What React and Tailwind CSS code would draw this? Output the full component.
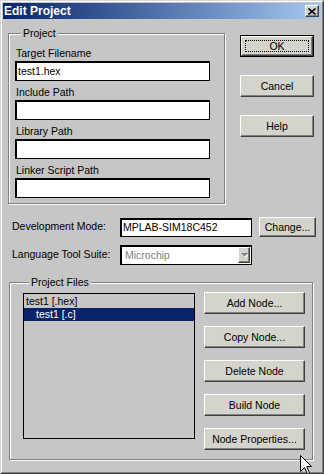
import React from "react";

function Btn({ children, className = "" }) {
  return (
    <div className={`flex items-center justify-center bg-[#d4d4cc] border border-t-white border-l-white border-r-[#404040] border-b-[#404040] shadow-[inset_-1px_-1px_0_#808080] text-black leading-none ${className}`}>
      {children}
    </div>
  );
}

function Field({ label, value }) {
  return (
    <div className="flex flex-col">
      <div className="leading-[12px] pl-[1px]">{label}</div>
      <div className="mt-[2px] w-[195px] h-[20px] bg-white border-black border-t-2 border-l-2 border-r border-b pl-[1px] leading-[16px]">
        {value}
      </div>
    </div>
  );
}

function Group({ title, className = "", children }) {
  return (
    <fieldset className={`border border-[#808080] shadow-[inset_1px_1px_0_#fff,1px_1px_0_#fff] ${className}`}>
      <legend className="ml-[6px] px-[2px] leading-[12px] bg-[#c6c6c6]">{title}</legend>
      {children}
    </fieldset>
  );
}

export default function App() {
  return (
    <div className="relative w-[324px] h-[474px] overflow-hidden bg-[#c6c6c6] border border-t-[#d8d8d8] border-l-[#d8d8d8] border-r-[#404040] border-b-[#404040] font-['Liberation_Sans',Arial,sans-serif] text-[10.5px] text-black">
      <div className="h-full flex flex-col p-px border border-t-white border-l-white border-r-[#808080] border-b-[#808080]">
        {/* title bar */}
        <div className="h-[16px] flex items-center justify-between pl-[1px] bg-gradient-to-r from-[#0a246a] to-[#a6caf0]">
          <span className="text-white font-bold text-[12px] leading-none">Edit Project</span>
          <Btn className="w-[14px] h-[12px] mr-[2px]">
            <svg width="8" height="7" viewBox="0 0 8 7">
              <path d="M0.5 0.5 L7.5 6.5 M7.5 0.5 L0.5 6.5" stroke="#000" strokeWidth="1.6" />
            </svg>
          </Btn>
        </div>

        {/* body */}
        <div className="flex flex-col">
          <div className="flex items-start mt-[8px] ml-[5px]">
            <Group title="Project" className="w-[217px] pt-[8px] pb-[5px] pl-[6px]">
              <div className="flex flex-col gap-[5px]">
                <Field label="Target Filename" value="test1.hex" />
                <Field label="Include Path" value="" />
                <Field label="Library Path" value="" />
                <Field label="Linker Script Path" value="" />
              </div>
            </Group>
            <div className="ml-[15px] mt-[8px] flex flex-col gap-[18px]">
              <div className="w-[74px] h-[22px] border border-black">
                <Btn className="w-full h-full p-[3px]">
                  <div className="w-full h-full border border-dotted border-black flex items-center justify-center">OK</div>
                </Btn>
              </div>
              <Btn className="w-[74px] h-[22px]">Cancel</Btn>
              <Btn className="w-[74px] h-[22px]">Help</Btn>
            </div>
          </div>

          <div className="mt-[13px] ml-[9px] h-[20px] flex items-center">
            <div className="w-[108px]">Development Mode:</div>
            <div className="w-[132px] h-[19px] bg-white border-black border-t-2 border-l-2 border-r border-b pl-[1px] leading-[15px]">MPLAB-SIM18C452</div>
            <Btn className="ml-[7px] w-[57px] h-[20px]">Change...</Btn>
          </div>

          <div className="mt-[8px] ml-[9px] h-[20px] flex items-center">
            <div className="w-[108px]">Language Tool Suite:</div>
            <div className="w-[132px] h-[20px] bg-white border-black border-t-2 border-l-2 border-r border-b flex items-start justify-between">
              <span className="pl-[3px] leading-[16px] text-[#808080]">Microchip</span>
              <Btn className="w-[12px] h-[16px] mr-px">
                <svg width="7" height="5" viewBox="0 0 7 5">
                  <path d="M1 1 H6 L3.5 3.6 Z" fill="#fff" transform="translate(1 1)" />
                  <path d="M0 0 H7 L3.5 3.6 Z" fill="#808080" />
                </svg>
              </Btn>
            </div>
          </div>

          <Group title="Project Files" className="mt-[11px] ml-[6px] w-[304px] pt-[4px] pb-[9px] pl-[13px]">
            <div className="flex items-start">
              <div className="mt-px w-[172px] h-[146px] bg-[#c6c6c6] border border-black pt-px">
                <div className="h-[13px] leading-[13px] pl-[2px]">test1 [.hex]</div>
                <div className="h-[13px] leading-[13px] pl-[12px] bg-[#0a246a] text-white">test1 [.c]</div>
              </div>
              <div className="ml-[9px] flex flex-col gap-[12px]">
                <Btn className="w-[101px] h-[22px]">Add Node...</Btn>
                <Btn className="w-[101px] h-[22px]">Copy Node...</Btn>
                <Btn className="w-[101px] h-[22px]">Delete Node</Btn>
                <Btn className="w-[101px] h-[22px]">Build Node</Btn>
                <Btn className="w-[101px] h-[22px]">Node Properties...</Btn>
              </div>
            </div>
          </Group>
        </div>
      </div>

      {/* mouse pointer */}
      <svg className="absolute left-[299px] top-[454px]" width="13" height="20" viewBox="0 0 13 20">
        <path d="M0.5 0.5 V16.5 L4.5 12.5 L7.5 19 L9.5 18 L6.7 11.5 H11.5 Z" fill="#fff" stroke="#000" strokeWidth="1" />
      </svg>
    </div>
  );
}
